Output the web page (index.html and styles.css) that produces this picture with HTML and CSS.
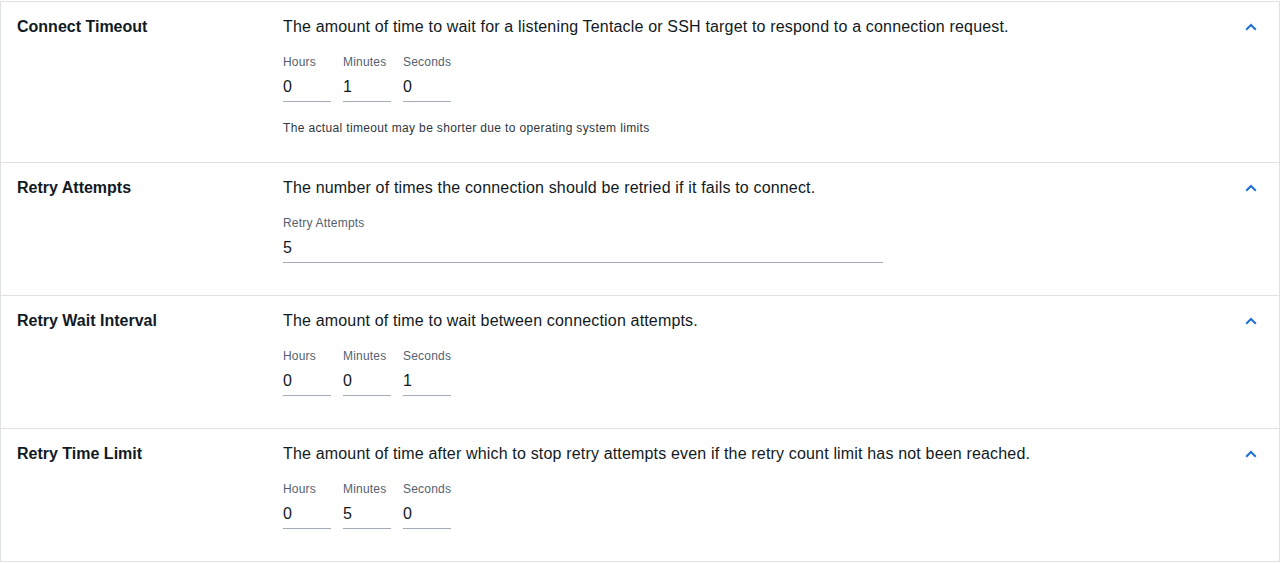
FILE: index.html
```html
<!DOCTYPE html>
<html lang="en">
<head>
<meta charset="utf-8">
<title>Connection settings</title>
<link rel="stylesheet" href="styles.css">
</head>
<body>
<div class="panel">
  <section class="row">
    <div class="title">Connect Timeout</div>
    <div class="body">
      <div class="desc">The amount of time to wait for a listening Tentacle or SSH target to respond to a connection request.</div>
      <div class="fields">
        <div class="field time"><div class="label">Hours</div><div class="input">0</div></div>
        <div class="field time"><div class="label">Minutes</div><div class="input">1</div></div>
        <div class="field time"><div class="label">Seconds</div><div class="input">0</div></div>
      </div>
      <div class="help">The actual timeout may be shorter due to operating system limits</div>
    </div>
    <div class="toggle"><svg width="12" height="8" viewBox="0 0 12 8"><path d="M1.2 6.8 L6 2 L10.8 6.8" fill="none" stroke="#1f6fd1" stroke-width="2"/></svg></div>
  </section>
  <section class="row">
    <div class="title">Retry Attempts</div>
    <div class="body">
      <div class="desc">The number of times the connection should be retried if it fails to connect.</div>
      <div class="fields">
        <div class="field wide"><div class="label">Retry Attempts</div><div class="input">5</div></div>
      </div>
    </div>
    <div class="toggle"><svg width="12" height="8" viewBox="0 0 12 8"><path d="M1.2 6.8 L6 2 L10.8 6.8" fill="none" stroke="#1f6fd1" stroke-width="2"/></svg></div>
  </section>
  <section class="row">
    <div class="title">Retry Wait Interval</div>
    <div class="body">
      <div class="desc">The amount of time to wait between connection attempts.</div>
      <div class="fields">
        <div class="field time"><div class="label">Hours</div><div class="input">0</div></div>
        <div class="field time"><div class="label">Minutes</div><div class="input">0</div></div>
        <div class="field time"><div class="label">Seconds</div><div class="input">1</div></div>
      </div>
    </div>
    <div class="toggle"><svg width="12" height="8" viewBox="0 0 12 8"><path d="M1.2 6.8 L6 2 L10.8 6.8" fill="none" stroke="#1f6fd1" stroke-width="2"/></svg></div>
  </section>
  <section class="row">
    <div class="title">Retry Time Limit</div>
    <div class="body">
      <div class="desc">The amount of time after which to stop retry attempts even if the retry count limit has not been reached.</div>
      <div class="fields">
        <div class="field time"><div class="label">Hours</div><div class="input">0</div></div>
        <div class="field time"><div class="label">Minutes</div><div class="input">5</div></div>
        <div class="field time"><div class="label">Seconds</div><div class="input">0</div></div>
      </div>
    </div>
    <div class="toggle"><svg width="12" height="8" viewBox="0 0 12 8"><path d="M1.2 6.8 L6 2 L10.8 6.8" fill="none" stroke="#1f6fd1" stroke-width="2"/></svg></div>
  </section>
</div>
</body>
</html>
```
FILE: styles.css
```css
* { box-sizing: border-box; }
html, body { margin: 0; padding: 0; background: #fff; }
body {
  padding-top: 1px;
  font-family: "Liberation Sans", Arial, sans-serif;
  color: #111a23;
}
.panel {
  width: 1280px;
  border-left: 1px solid #dfe1e5;
  border-right: 1px solid #dfe1e5;
  border-bottom: 1px solid #dfe1e5;
}
.row {
  display: flex;
  border-top: 1px solid #dfe1e5;
  padding: 13px 16px 24px 16px;
}
.title {
  width: 266px;
  flex: none;
  font-size: 16px;
  line-height: 24px;
  font-weight: 700;
}
.body { flex: 1; min-width: 0; }
.desc {
  font-size: 16px;
  line-height: 24px;
  letter-spacing: 0.17px;
}
.fields {
  display: flex;
  gap: 12px;
  margin-top: 15px;
  margin-bottom: 8px;
}
.field.time { width: 48px; }
.field.wide { width: 600px; }
.label {
  font-size: 12px;
  line-height: 16px;
  letter-spacing: 0.2px;
  color: #545f70;
}
.input {
  height: 32px;
  padding-top: 2px;
  font-size: 16px;
  line-height: 29px;
  border-bottom: 1px solid #a3aab8;
  color: #111a23;
}
.help {
  margin-top: 16px;
  font-size: 12px;
  line-height: 20px;
  letter-spacing: 0.35px;
  color: #2e3640;
}
.toggle {
  width: 24px;
  height: 24px;
  flex: none;
  display: flex;
  align-items: center;
  justify-content: center;
}
```
